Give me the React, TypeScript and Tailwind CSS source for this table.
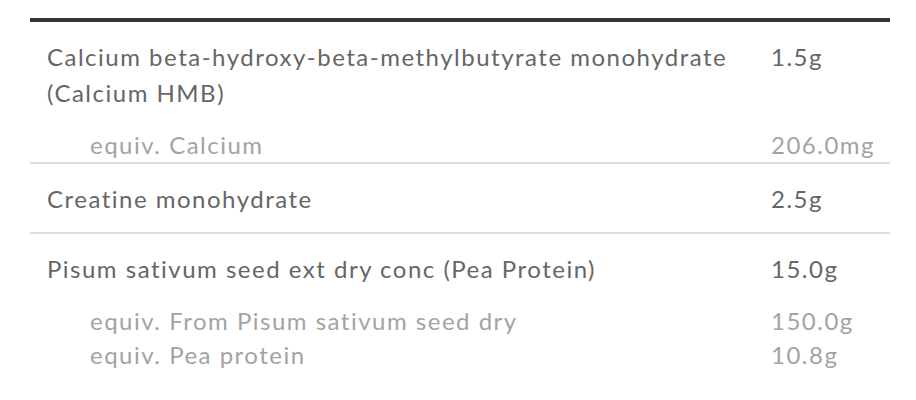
const rows = [
  {
    name: "Calcium beta-hydroxy-beta-methylbutyrate monohydrate (Calcium HMB)",
    amount: "1.5g",
    subs: [{ name: "equiv. Calcium", amount: "206.0mg" }],
  },
  { name: "Creatine monohydrate", amount: "2.5g", subs: [] },
  {
    name: "Pisum sativum seed ext dry conc (Pea Protein)",
    amount: "15.0g",
    subs: [
      { name: "equiv. From Pisum sativum seed dry", amount: "150.0g" },
      { name: "equiv. Pea protein", amount: "10.8g" },
    ],
  },
];

export default function App() {
  return (
    <div className="w-[916px] h-[400px] bg-white pt-[18px] pl-[30px] font-['Lato',sans-serif] text-[24px] tracking-[1.5px]">
      <div className="w-[860px] border-t-4 border-[#333333]">
        {rows.map((row, i) => (
          <div
            key={row.name}
            className={`pt-[17px] ${i < rows.length - 1 ? "border-b-2 border-[#dddddd]" : ""} ${row.subs.length ? "pb-0" : "pb-[15px]"}`}
          >
            <div className="flex leading-[36px] text-[#666666]">
              <div className="w-[741px] pl-[17px] pr-[30px]">{row.name}</div>
              <div className="flex-1">{row.amount}</div>
            </div>
            {row.subs.length > 0 && (
              <div className="pt-[17px]">
                {row.subs.map((s) => (
                  <div key={s.name} className="flex leading-[34px] text-[#a3a3a3]">
                    <div className="w-[741px] pl-[60px]">{s.name}</div>
                    <div className="flex-1">{s.amount}</div>
                  </div>
                ))}
              </div>
            )}
          </div>
        ))}
      </div>
    </div>
  );
}
